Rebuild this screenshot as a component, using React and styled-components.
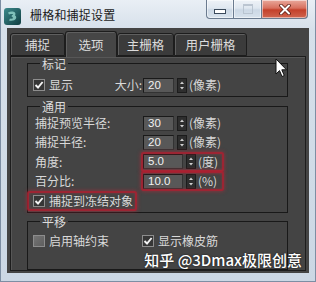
import React from 'react';
import styled, { createGlobalStyle } from 'styled-components';

const Global = createGlobalStyle`
  html, body { margin: 0; padding: 0; background: #c9d6e3; }
  body {
    width: 316px; height: 282px; overflow: hidden;
    font-family: "Noto Sans CJK SC", "Noto Sans", sans-serif;
  }
`;

const Frame = styled.div`
  position: relative;
  box-sizing: border-box;
  width: 316px;
  height: 282px;
  display: flex;
  flex-direction: column;
  background: linear-gradient(180deg, #e9eff5 0px, #d6e0ea 30px, #cbd7e4 100%);
  border: 1px solid #7d8ea3;
  border-top: none;
`;

const TitleBar = styled.div`
  height: 28px;
  flex: none;
  display: flex;
  align-items: flex-start;
  padding-left: 2px;
`;

const AppIcon = styled.svg`
  width: 19px;
  height: 19px;
  margin-top: 7px;
  flex: none;
`;

const Title = styled.div`
  margin: 7px 0 0 8px;
  font-size: 12px;
  line-height: 16px;
  color: #1b1b1b;
  letter-spacing: 0.2px;
`;

const Caption = styled.div`
  margin-left: auto;
  margin-right: 7px;
  display: flex;
  height: 19px;
`;

const CapBtn = styled.div`
  box-sizing: border-box;
  width: ${p => p.$w}px;
  height: 19px;
  display: flex;
  align-items: center;
  justify-content: center;
  border: 1px solid #6b7b8f;
  border-top: none;
  border-left: ${p => (p.$first ? '1px solid #6b7b8f' : 'none')};
  border-radius: ${p => p.$radius};
  background: ${p =>
    p.$close
      ? 'linear-gradient(180deg, #e9a99c 0%, #d8705e 45%, #c4412b 55%, #d0654f 100%)'
      : 'linear-gradient(180deg, #eef2f7 0%, #dfe7f0 45%, #ccd8e5 55%, #d8e2ec 100%)'};
  box-shadow: inset 0 0 0 1px rgba(255, 255, 255, 0.5);
`;

const MinGlyph = styled.div`
  width: 10px;
  height: 3px;
  margin-top: 5px;
  background: #fff;
  border: 1px solid #3b4a5c;
`;

const MaxGlyph = styled.div`
  width: 8px;
  height: 7px;
  border: 1px solid #b6c1cd;
  border-top-width: 2px;
  opacity: 0.9;
`;

const Body = styled.div`
  flex: 1;
  display: flex;
  flex-direction: column;
  padding: 0 6px 8px 6px;
  min-height: 0;
`;

const Client = styled.div`
  flex: 1;
  display: flex;
  flex-direction: column;
  background: #444444;
  padding: 3px 3px 2px 3px;
  min-height: 0;
`;

const TabBar = styled.div`
  display: flex;
  align-items: flex-end;
  height: 25px;
  flex: none;
`;

const Tab = styled.div`
  box-sizing: border-box;
  width: ${p => p.$w}px;
  height: ${p => (p.$active ? 26 : 23)}px;
  margin-bottom: ${p => (p.$active ? -1 : 0)}px;
  border: 1px solid #1d1d1d;
  border-bottom: ${p => (p.$active ? 'none' : '1px solid #1d1d1d')};
  border-radius: 3px 3px 0 0;
  background: ${p => (p.$active ? '#464646' : '#3b3b3b')};
  box-shadow: inset 1px 1px 0 #5f5f5f;
  color: #dcdcdc;
  font-size: 12.5px;
  line-height: 14px;
  display: flex;
  align-items: center;
  justify-content: center;
  position: relative;
  z-index: ${p => (p.$active ? 1 : 0)};
`;

const Pane = styled.div`
  flex: 1;
  border: 1px solid #1d1d1d;
  box-shadow: inset 1px 1px 0 #575757;
  padding: 0 17px 0 16px;
  display: flex;
  flex-direction: column;
  min-height: 0;
`;

const Group = styled.fieldset`
  margin: ${p => p.$mt || 0}px 0 0 0;
  padding: ${p => p.$pt}px 0 ${p => p.$pb}px 7px;
  border: 1px solid #191919;
  min-inline-size: 0;
  display: flex;
  flex-direction: column;
  gap: ${p => p.$gap || 0}px;
`;

const Legend = styled.legend`
  margin-left: 5px;
  padding: 0 2px;
  font-size: 12px;
  line-height: 13px;
  color: #dcdcdc;
`;

const FieldRow = styled.div`
  display: grid;
  grid-template-columns: 108px auto;
  align-items: center;
  height: 16px;
`;

const LabelCell = styled.div`
  display: flex;
  align-items: center;
  justify-content: ${p => (p.$split ? 'space-between' : 'flex-start')};
  font-size: 12px;
  color: #d9d9d9;
  line-height: 14px;
  padding-right: ${p => (p.$split ? 1 : 0)}px;
`;

const Text = styled.span`
  font-size: 12px;
  line-height: 14px;
  color: #d9d9d9;
  white-space: nowrap;
`;

const Field = styled.div`
  position: relative;
  display: flex;
  align-items: center;
  width: 78px;
  height: 16px;
`;

const Highlight = styled.div`
  position: relative;
  display: flex;
  align-items: center;
  &::after {
    content: '';
    position: absolute;
    inset: ${p => p.$inset};
    border: 2px solid rgba(172, 32, 48, 0.85);
    border-radius: 2px;
    box-shadow: 0 0 4px rgba(205, 35, 55, 0.6), inset 0 0 3px rgba(205, 35, 55, 0.45);
    pointer-events: none;
  }
`;

const NumBox = styled.div`
  box-sizing: border-box;
  width: 40px;
  height: 15px;
  background: #585858;
  border: 1px solid #1a1a1a;
  border-right-color: #333;
  border-bottom-color: #333;
  color: #f2f2f2;
  font-family: "Liberation Sans", Arial, sans-serif;
  font-size: 11.5px;
  line-height: 13px;
  padding-left: 4px;
`;

const Spinner = styled.svg`
  margin-left: 3px;
  width: 10px;
  height: 15px;
  flex: none;
`;

const Unit = styled(Text)`
  margin-left: 2px;
`;

const CheckRow = styled.div`
  display: flex;
  align-items: center;
  height: 16px;
`;

const CheckItem = styled.label`
  display: flex;
  align-items: center;
  gap: 4px;
  margin-left: -2px;
  width: ${p => (p.$w ? `${p.$w}px` : 'auto')};
  flex: none;
`;

const Box = styled.div`
  box-sizing: border-box;
  width: 12px;
  height: 12px;
  border: 1px solid #8d8d8d;
  background: ${p => (p.$checked ? '#363636' : 'linear-gradient(135deg, #757575, #5e5e5e)')};
  display: flex;
  align-items: center;
  justify-content: center;
`;

const Cursor = styled.svg`
  position: absolute;
  left: 274px;
  top: 58px;
  width: 13px;
  height: 20px;
`;

const Watermark = styled.div`
  position: absolute;
  right: 13px;
  bottom: 12px;
  font-size: 15px;
  line-height: 18px;
  font-weight: 500;
  color: #ffffff;
  text-shadow: 0 0 2px rgba(0, 0, 0, 0.7);
  white-space: nowrap;
`;

function Check({ checked }) {
  return (
    <Box $checked={checked}>
      {checked && (
        <svg width="10" height="10" viewBox="0 0 10 10">
          <path d="M1.5 5 L4 7.5 L8.6 2" fill="none" stroke="#f4f4f4" strokeWidth="1.9" />
        </svg>
      )}
    </Box>
  );
}

function Spin() {
  return (
    <Spinner viewBox="0 0 10 15">
      <rect x="0.5" y="0.5" width="9" height="14" fill="#2e2e2e" stroke="#1c1c1c" />
      <path d="M3 6 L5 3.5 L7 6 Z" fill="#d0d0d0" />
      <path d="M3 9 L5 11.5 L7 9 Z" fill="#d0d0d0" />
    </Spinner>
  );
}

function NumField({ value, unit, hl }) {
  const inner = (
    <>
      <NumBox>{value}</NumBox>
      <Spin />
      <Unit>{unit}</Unit>
    </>
  );
  return (
    <Field>
      {hl ? <Highlight $inset="-2px -3px -2px -2px" style={{ width: '100%', height: '100%' }}>{inner}</Highlight> : inner}
    </Field>
  );
}

export default function App() {
  return (
    <>
      <Global />
      <Frame>
        <TitleBar>
          <AppIcon viewBox="0 0 19 19">
            <defs>
              <linearGradient id="ig" x1="0" y1="0" x2="1" y2="1">
                <stop offset="0" stopColor="#3d8a8c" />
                <stop offset="1" stopColor="#0f3d41" />
              </linearGradient>
            </defs>
            <rect x="1" y="1" width="17" height="17" rx="3" fill="url(#ig)" />
            <path d="M5 5.5 C9 3.5 14 5 12 8.5 C15 10 12.5 15 6 13.5 L7 11.5 C10 12.3 11 10.5 8.5 9.6 L9 8 C11 7.6 10.5 6.2 6 7.5 Z" fill="#8fd0c8" opacity="0.85" />
          </AppIcon>
          <Title>栅格和捕捉设置</Title>
          <Caption>
            <CapBtn $w={28} $first $radius="0 0 0 4px"><MinGlyph /></CapBtn>
            <CapBtn $w={28} $radius="0"><MaxGlyph /></CapBtn>
            <CapBtn $w={46} $close $radius="0 0 4px 0">
              <svg width="14" height="11" viewBox="0 0 14 11">
                <path d="M3 1.5 L11 9.5 M11 1.5 L3 9.5" stroke="#5a1d14" strokeWidth="3.6" strokeLinecap="round" />
                <path d="M3 1.5 L11 9.5 M11 1.5 L3 9.5" stroke="#ffffff" strokeWidth="2" strokeLinecap="round" />
              </svg>
            </CapBtn>
          </Caption>
        </TitleBar>
        <Body>
          <Client>
            <TabBar>
              <Tab $w={55}>捕捉</Tab>
              <Tab $w={52} $active>选项</Tab>
              <Tab $w={57}>主栅格</Tab>
              <Tab $w={73}>用户栅格</Tab>
            </TabBar>
            <Pane>
              <Group $pt={7} $pb={3}>
                <Legend>标记</Legend>
                <FieldRow>
                  <LabelCell $split>
                    <CheckItem>
                      <Check checked />
                      <Text>显示</Text>
                    </CheckItem>
                    <Text>大小:</Text>
                  </LabelCell>
                  <NumField value="20" unit="(像素)" />
                </FieldRow>
              </Group>
              <Group $mt={3} $pt={2} $pb={3.4} $gap={3.4}>
                <Legend>通用</Legend>
                <FieldRow>
                  <LabelCell>捕捉预览半径:</LabelCell>
                  <NumField value="30" unit="(像素)" />
                </FieldRow>
                <FieldRow>
                  <LabelCell>捕捉半径:</LabelCell>
                  <NumField value="20" unit="(像素)" />
                </FieldRow>
                <FieldRow>
                  <LabelCell>角度:</LabelCell>
                  <NumField value="5.0" unit="(度)" hl />
                </FieldRow>
                <FieldRow>
                  <LabelCell>百分比:</LabelCell>
                  <NumField value="10.0" unit="(%)" hl />
                </FieldRow>
                <CheckRow>
                  <Highlight $inset="-3px -4px -3px -8px">
                    <CheckItem>
                      <Check checked />
                      <Text>捕捉到冻结对象</Text>
                    </CheckItem>
                  </Highlight>
                </CheckRow>
              </Group>
              <Group $mt={2} $pt={5} $pb={20}>
                <Legend>平移</Legend>
                <CheckRow>
                  <CheckItem $w={111}>
                    <Check />
                    <Text>启用轴约束</Text>
                  </CheckItem>
                  <CheckItem>
                    <Check checked />
                    <Text>显示橡皮筋</Text>
                  </CheckItem>
                </CheckRow>
              </Group>
            </Pane>
          </Client>
        </Body>
        <Cursor viewBox="0 0 13 20">
          <path d="M1 1 L1 16 L4.5 12.6 L7 18.5 L9.3 17.5 L6.8 11.8 L11.5 11.8 Z" fill="#ffffff" stroke="#111" strokeWidth="1" strokeLinejoin="round" />
        </Cursor>
        <Watermark>知乎 @3Dmax极限创意</Watermark>
      </Frame>
    </>
  );
}
